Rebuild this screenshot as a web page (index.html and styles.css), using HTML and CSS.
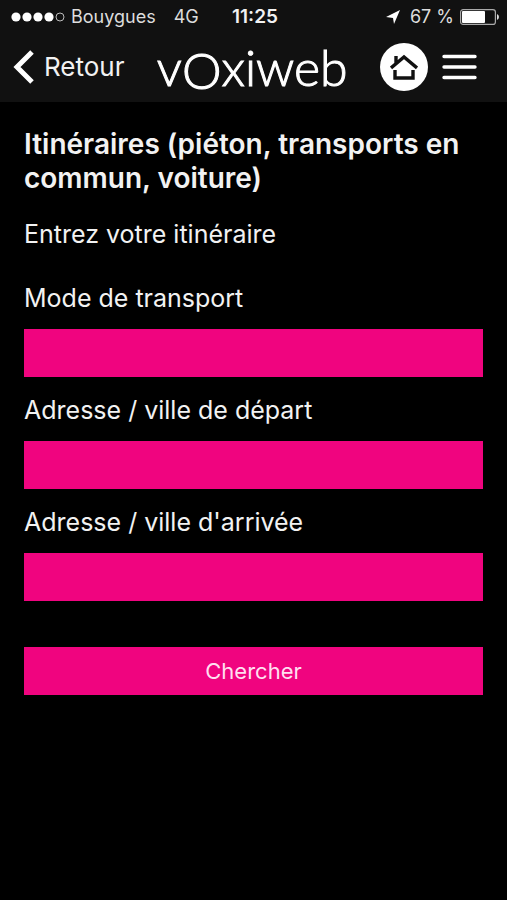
FILE: index.html
```html
<!DOCTYPE html>
<html lang="fr">
<head>
<meta charset="utf-8">
<meta name="viewport" content="width=device-width, initial-scale=1">
<title>Voxiweb</title>
<link rel="stylesheet" href="styles.css">
</head>
<body>
<header class="top">
  <div class="status">
    <div class="status-left">
      <svg class="signal" width="54" height="10" viewBox="0 0 54 10" aria-hidden="true">
        <g fill="#fff"><circle cx="5" cy="5" r="4.6"/><circle cx="16" cy="5" r="4.6"/><circle cx="27" cy="5" r="4.6"/><circle cx="38" cy="5" r="4.6"/></g>
        <circle cx="49" cy="5" r="4" fill="none" stroke="#bbb" stroke-width="1"/>
      </svg>
      <span class="carrier">Bouygues</span>
      <span>4G</span>
    </div>
    <time class="clock">11:25</time>
    <div class="status-right">
      <svg class="location" width="14" height="14" viewBox="0 0 14 14" aria-hidden="true"><path d="M14 0 8 14 7 8 0 7Z" fill="#fff"/></svg>
      <span>67 %</span>
      <svg width="39" height="16" viewBox="0 0 39 16" aria-hidden="true">
        <rect x=".6" y=".6" width="34.8" height="14.8" rx="2.5" fill="none" stroke="#aaa" stroke-width="1.2"/>
        <rect x="2" y="2" width="23" height="12" rx="1" fill="#fff"/>
        <path d="M37 5q2 1 2 3t-2 3Z" fill="#ddd"/>
      </svg>
    </div>
  </div>
  <nav class="bar">
    <a class="back" href="#">
      <svg width="22" height="34" viewBox="0 0 22 34" aria-hidden="true"><path d="M20 2 5 17 20 32" fill="none" stroke="#fff" stroke-width="5"/></svg>
      Retour
    </a>
    <div class="logo">v<span class="logo-o">O</span>xiweb</div>
    <div class="actions">
      <a class="home" href="#" aria-label="Accueil">
        <svg width="28" height="26" viewBox="0 0 28 26" fill="none" stroke="#111" stroke-width="3.4" aria-hidden="true"><path d="M1 14 14 3 27 14M6 10V2M5 16V24H23V16"/></svg>
      </a>
      <button class="menu" type="button" aria-label="Menu">
        <svg width="35" height="26" viewBox="0 0 35 26" stroke="#fff" stroke-width="3.4" stroke-linecap="round" aria-hidden="true"><path d="M2 2.5H33M2 13H33M2 23.5H33"/></svg>
      </button>
    </div>
  </nav>
</header>
<main class="content">
  <h1>Itinéraires (piéton, transports en commun, voiture)</h1>
  <p>Entrez votre itinéraire</p>
  <form>
    <div class="field">
      <label for="mode">Mode de transport</label>
      <select id="mode"><option></option></select>
    </div>
    <div class="field">
      <label for="depart">Adresse / ville de départ</label>
      <input id="depart" type="text">
    </div>
    <div class="field">
      <label for="arrivee">Adresse / ville d'arrivée</label>
      <input id="arrivee" type="text">
    </div>
    <button class="submit" type="submit">Chercher</button>
  </form>
</main>
</body>
</html>
```
FILE: styles.css
```css
* {
  box-sizing: border-box;
}

body {
  margin: 0;
  min-height: 100vh;
  background: #000;
  color: #f2f2f2;
  font: 25px/34px Inter, "Liberation Sans", sans-serif;
}

.top {
  background: #111;
  padding-bottom: 2px;
}

.status {
  display: grid;
  grid-template-columns: 1fr auto 1fr;
  align-items: center;
  height: 34px;
  padding: 0 8px 0 11px;
  font-size: 18px;
  line-height: 24px;
  color: #ddd;
}

.status-left,
.status-right {
  display: flex;
  align-items: center;
  gap: 6px;
}

.status-right {
  justify-content: flex-end;
}

.carrier {
  margin-right: 12px;
}

.location {
  margin-right: 4px;
}

.clock {
  font-size: 19px;
  font-weight: 600;
  color: #f2f2f2;
}

.bar {
  display: flex;
  align-items: center;
  justify-content: space-between;
  height: 66px;
  padding: 0 30px 0 12px;
}

.back {
  display: flex;
  align-items: center;
  gap: 10px;
  color: inherit;
  font-size: 26px;
  text-decoration: none;
}

.back svg,
.home svg,
.menu svg {
  display: block;
}

.logo {
  color: #fff;
  font: 300 50px/66px Lato, sans-serif;
  white-space: nowrap;
  -webkit-text-stroke: 1px #fff;
}

.logo-o {
  line-height: 1;
  vertical-align: -3px;
}

.actions {
  display: flex;
  align-items: center;
  gap: 14px;
}

.home {
  display: grid;
  place-items: center;
  width: 48px;
  height: 48px;
  border-radius: 50%;
  background: #fff;
}

.menu {
  padding: 0;
  border: 0;
  background: none;
}

.content {
  padding: 25px 24px;
}

h1 {
  margin: 0 0 22px;
  font-size: 28px;
  line-height: 34px;
  font-weight: 600;
}

p {
  margin: 0 0 30px;
}

.field {
  margin-bottom: 16px;
}

label {
  display: block;
  margin-bottom: 14px;
}

input,
select,
.submit {
  display: block;
  width: 100%;
  height: 48px;
  padding: 0 12px;
  border: 0;
  border-radius: 0;
  appearance: none;
  background: #f0047f;
  color: #ffdff0;
  font: inherit;
}

.submit {
  margin-top: 46px;
  font-size: 22px;
}
```
